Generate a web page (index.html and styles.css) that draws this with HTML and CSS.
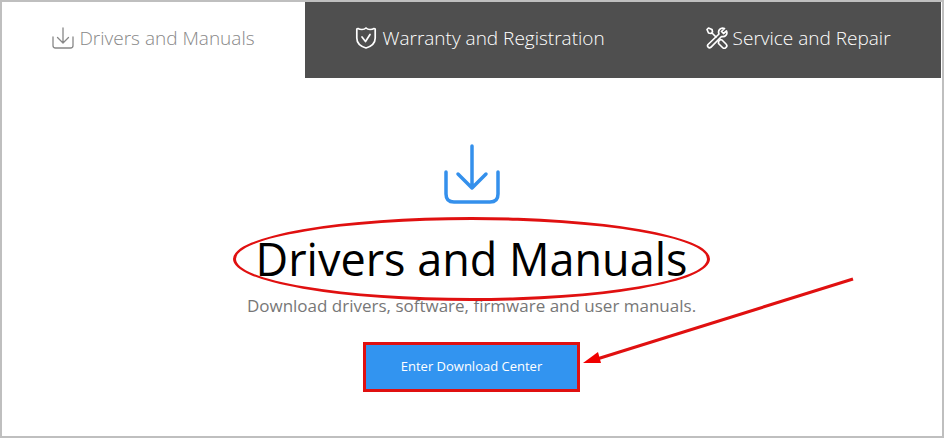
FILE: index.html
```html
<!DOCTYPE html>
<html lang="en">
<head>
  <meta charset="UTF-8" />
  <meta name="viewport" content="width=device-width, initial-scale=1.0" />
  <title>Drivers and Manuals</title>
  <link rel="stylesheet" href="styles.css">
</head>
<body>
  <div class="page">
    <nav class="tabs">
      <a href="#drivers" class="tab active">
        <svg class="tab-icon" viewBox="0 0 22 22">
          <path d="M1 10v8.500q0 2.500 2.500 2.500h15q2.500 0 2.500-2.500V10M11 1v14.500M5.500 10.500l5.500 5.500 5.500-5.500" />
        </svg>
        <span>Drivers and Manuals</span>
      </a>
      <a href="#warranty" class="tab">
        <svg class="tab-icon bold" viewBox="0 0 22 22">
          <path d="M11 1Q9.500 2.500 7 2.500T3 1.500L1.800 2v9c0 5 4.200 8.500 9.200 10 5-1.500 9.200-5 9.200-10V2L19 1.500q-1.500 1-4 1T11 1z" />
          <path d="M7 10l3.500 4.500 4.500-7" />
        </svg>
        <span>Warranty and Registration</span>
      </a>
      <a href="#service" class="tab">
        <svg class="tab-icon bold" viewBox="0 0 22 22">
          <path d="M1 2.500L2.500 1l3.500 1.500.5 2.500L5 6.500l-2.500-.5zM6 6l4 4" />
          <path d="M12.500 14.500l2-2 1.500.5 4 4a2.300 2.300 0 0 1-3.500 3.500l-4-4z" />
          <path d="M18.500 1.500c-4-1.500-7 2-5.500 5.500L2 17.500a2 2 0 0 0 2.800 2.800L15.500 9.500c3.500 1 6.500-2 5-5.500l-3 2.500-2-2z" />
        </svg>
        <span>Service and Repair</span>
      </a>
    </nav>

    <main class="panel" id="drivers">
      <svg class="panel-icon" viewBox="0 0 56 60">
        <path d="M2 28v22q0 8 8 8h36q8 0 8-8V28M28 2v42M14 30l14 14 14-14" />
      </svg>
      <div class="heading">
        <h1>Drivers and Manuals</h1>
        <span class="circle-mark"></span>
      </div>
      <p>Download drivers, software, firmware and user manuals.</p>
      <div class="action">
        <button type="button">Enter Download Center</button>
        <svg class="arrow-mark" viewBox="0 0 272 88">
          <path class="arrow-line" d="M270 2L14 82" />
          <path class="arrow-head" d="M0 86L15 75l3 11z" />
        </svg>
      </div>
    </main>
  </div>
</body>
</html>
```

FILE: styles.css
```css
* {
  margin: 0;
  padding: 0;
  box-sizing: border-box;
}

body {
  font-family: 'Open Sans', 'Noto Sans', sans-serif;
  background: #fff;
}

.page {
  min-height: 100vh;
  border: 2px solid #bfbfbf;
  padding-right: 1px;
  overflow: hidden;
}

.tabs {
  display: flex;
  background: #4f4f4f;
}

.tab {
  flex: 1 1 auto;
  height: 76px;
  padding-bottom: 4px;
  display: flex;
  justify-content: center;
  align-items: center;
  gap: 5px;
  color: #fff;
  font-size: 19px;
  font-weight: 300;
  text-decoration: none;
  white-space: nowrap;
}

.tab.active {
  background: #fff;
  color: #888;
}

.tab-icon {
  width: 22px;
  height: 22px;
  fill: none;
  stroke: currentColor;
  stroke-width: 1.3;
  stroke-linecap: round;
  stroke-linejoin: round;
}

.tab-icon.bold {
  stroke-width: 1.7;
}

.panel {
  padding-top: 66px;
  display: flex;
  flex-direction: column;
  align-items: center;
  text-align: center;
}

.panel-icon {
  width: 56px;
  height: 60px;
  fill: none;
  stroke: #3490ec;
  stroke-width: 3.5;
  stroke-linecap: round;
  stroke-linejoin: round;
}

.heading {
  position: relative;
  margin-top: 22px;
}

.heading h1 {
  font-size: 45px;
  line-height: 66px;
  font-weight: 400;
  color: #000;
}

/* red callouts drawn over the page */
.circle-mark {
  position: absolute;
  inset: -9px -23px;
  border: 3px solid #e01010;
  border-radius: 50%;
}

.panel p {
  font-size: 17px;
  line-height: 28px;
  color: #777;
}

.action {
  position: relative;
  margin-top: 22px;
}

.action button {
  width: 217px;
  height: 50px;
  padding-bottom: 2px;
  border: 3px solid #e01010;
  background: #3294f0;
  color: #fff;
  font-family: inherit;
  font-size: 13px;
  cursor: pointer;
}

.arrow-mark {
  position: absolute;
  left: 100%;
  bottom: 27px;
  width: 272px;
  height: 88px;
  margin-left: 3px;
}

.arrow-line {
  stroke: #e01010;
  stroke-width: 3;
}

.arrow-head {
  fill: #f00000;
}
```
